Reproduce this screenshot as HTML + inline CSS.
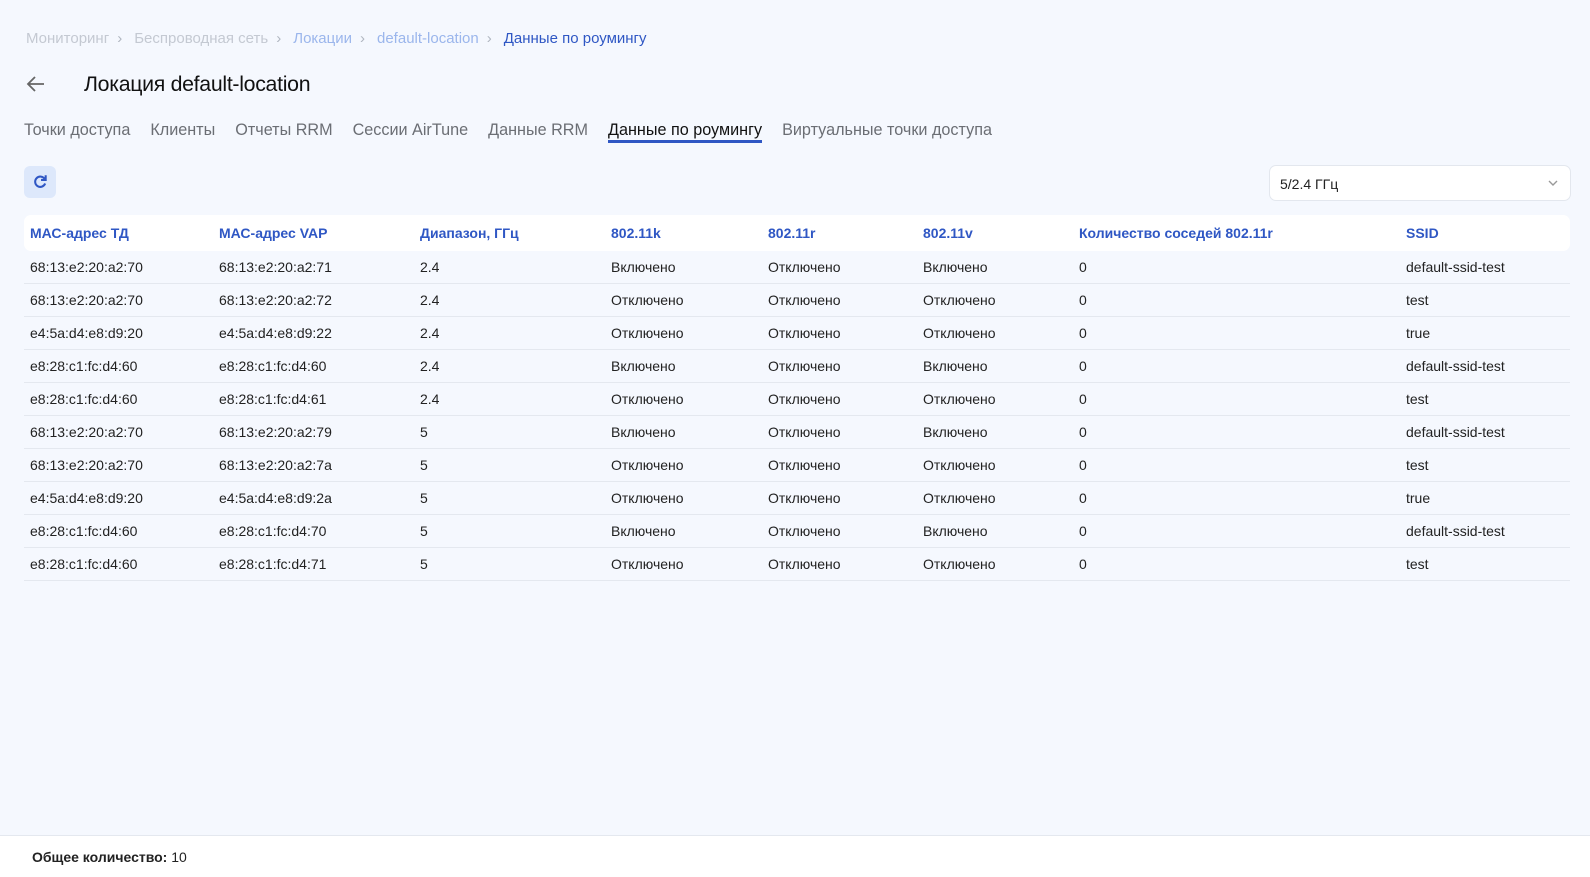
<!DOCTYPE html>
<html><head><meta charset="utf-8"><style>
*{box-sizing:border-box;margin:0;padding:0}
body{width:1590px;height:877px;background:#f5f8fe;font-family:"Liberation Sans","DejaVu Sans",sans-serif;color:#222;position:relative;overflow:hidden}
.bc{position:absolute;top:30px;left:26px;font-size:15px;color:#c4c9d2;white-space:nowrap}
.bc span{margin-right:8px}
.bc .sep{margin:0 12px 0 0;color:#b0b6c0}
.bc .l{color:#9bb6ec}.bc .c{color:#2f57c4}
.title{position:absolute;top:72px;left:84px;font-size:21.3px;color:#111;letter-spacing:-0.3px}
.back{position:absolute;top:75px;left:26px}
.tabs{position:absolute;top:121px;left:24px;font-size:16.2px;color:#6b6e74;white-space:nowrap}
.tabs span{margin-right:20px;display:inline-block}
.tabs .a{color:#111;border-bottom:3px solid #2f57c4;line-height:19px}
.ref{position:absolute;top:166px;left:24px;width:32px;height:32px;background:#dde8fb;border-radius:6px}
.sel{position:absolute;top:165px;left:1269px;width:302px;height:36px;background:#fff;border:1px solid #e3e7ee;border-radius:7px;font-size:14px;padding:10px 10px}
.tbl{position:absolute;top:215px;left:24px;width:1546px}
.row{height:33px;border-bottom:1px solid #e4e8ef;position:relative;font-size:14px}
.hd{background:#fff;border-radius:7px;height:36px;border-bottom:none;color:#2f57c4;font-weight:bold;font-size:14px}
.row div{position:absolute;top:8px;white-space:nowrap}
.hd div{top:10px}
.foot{position:absolute;top:835px;left:0;width:1590px;height:42px;background:#fff;border-top:1px solid #e4e8ef;font-size:14px;padding:13px 32px}
</style></head><body>
<div class="bc"><span>Мониторинг</span><span class="sep">›</span><span>Беспроводная сеть</span><span class="sep">›</span><span class="l">Локации</span><span class="sep">›</span><span class="l">default-location</span><span class="sep">›</span><span class="c">Данные по роумингу</span></div>
<svg class="back" width="20" height="18" viewBox="0 0 20 18"><path d="M18 9H3M9 2L2 9l7 7" stroke="#666" stroke-width="1.8" fill="none"/></svg>
<div class="title">Локация default-location</div>
<div class="tabs"><span>Точки доступа</span><span>Клиенты</span><span>Отчеты RRM</span><span>Сессии AirTune</span><span>Данные RRM</span><span class="a">Данные по роумингу</span><span>Виртуальные точки доступа</span></div>
<div class="ref"><svg width="32" height="32" viewBox="0 0 31 31"><path d="M20 12.5A5 5 0 1 0 20.5 17" stroke="#2f57c4" stroke-width="2" fill="none"/><path d="M21 9v4.5h-4.5" stroke="#2f57c4" stroke-width="2" fill="none"/></svg></div>
<div class="sel">5/2.4 ГГц<svg style="position:absolute;right:12px;top:14px" width="10" height="7" viewBox="0 0 10 7"><path d="M1 1l4 4 4-4" stroke="#999" stroke-width="1.4" fill="none"/></svg></div>
<div class="tbl">
<div class="row hd"><div style="left:6px">МАС-адрес ТД</div><div style="left:195px">МАС-адрес VAP</div><div style="left:396px">Диапазон, ГГц</div><div style="left:587px">802.11k</div><div style="left:744px">802.11r</div><div style="left:899px">802.11v</div><div style="left:1055px">Количество соседей 802.11r</div><div style="left:1382px">SSID</div></div>
<div class="row"><div style="left:6px">68:13:e2:20:a2:70</div><div style="left:195px">68:13:e2:20:a2:71</div><div style="left:396px">2.4</div><div style="left:587px">Включено</div><div style="left:744px">Отключено</div><div style="left:899px">Включено</div><div style="left:1055px">0</div><div style="left:1382px">default-ssid-test</div></div>
<div class="row"><div style="left:6px">68:13:e2:20:a2:70</div><div style="left:195px">68:13:e2:20:a2:72</div><div style="left:396px">2.4</div><div style="left:587px">Отключено</div><div style="left:744px">Отключено</div><div style="left:899px">Отключено</div><div style="left:1055px">0</div><div style="left:1382px">test</div></div>
<div class="row"><div style="left:6px">e4:5a:d4:e8:d9:20</div><div style="left:195px">e4:5a:d4:e8:d9:22</div><div style="left:396px">2.4</div><div style="left:587px">Отключено</div><div style="left:744px">Отключено</div><div style="left:899px">Отключено</div><div style="left:1055px">0</div><div style="left:1382px">true</div></div>
<div class="row"><div style="left:6px">e8:28:c1:fc:d4:60</div><div style="left:195px">e8:28:c1:fc:d4:60</div><div style="left:396px">2.4</div><div style="left:587px">Включено</div><div style="left:744px">Отключено</div><div style="left:899px">Включено</div><div style="left:1055px">0</div><div style="left:1382px">default-ssid-test</div></div>
<div class="row"><div style="left:6px">e8:28:c1:fc:d4:60</div><div style="left:195px">e8:28:c1:fc:d4:61</div><div style="left:396px">2.4</div><div style="left:587px">Отключено</div><div style="left:744px">Отключено</div><div style="left:899px">Отключено</div><div style="left:1055px">0</div><div style="left:1382px">test</div></div>
<div class="row"><div style="left:6px">68:13:e2:20:a2:70</div><div style="left:195px">68:13:e2:20:a2:79</div><div style="left:396px">5</div><div style="left:587px">Включено</div><div style="left:744px">Отключено</div><div style="left:899px">Включено</div><div style="left:1055px">0</div><div style="left:1382px">default-ssid-test</div></div>
<div class="row"><div style="left:6px">68:13:e2:20:a2:70</div><div style="left:195px">68:13:e2:20:a2:7a</div><div style="left:396px">5</div><div style="left:587px">Отключено</div><div style="left:744px">Отключено</div><div style="left:899px">Отключено</div><div style="left:1055px">0</div><div style="left:1382px">test</div></div>
<div class="row"><div style="left:6px">e4:5a:d4:e8:d9:20</div><div style="left:195px">e4:5a:d4:e8:d9:2a</div><div style="left:396px">5</div><div style="left:587px">Отключено</div><div style="left:744px">Отключено</div><div style="left:899px">Отключено</div><div style="left:1055px">0</div><div style="left:1382px">true</div></div>
<div class="row"><div style="left:6px">e8:28:c1:fc:d4:60</div><div style="left:195px">e8:28:c1:fc:d4:70</div><div style="left:396px">5</div><div style="left:587px">Включено</div><div style="left:744px">Отключено</div><div style="left:899px">Включено</div><div style="left:1055px">0</div><div style="left:1382px">default-ssid-test</div></div>
<div class="row"><div style="left:6px">e8:28:c1:fc:d4:60</div><div style="left:195px">e8:28:c1:fc:d4:71</div><div style="left:396px">5</div><div style="left:587px">Отключено</div><div style="left:744px">Отключено</div><div style="left:899px">Отключено</div><div style="left:1055px">0</div><div style="left:1382px">test</div></div>
</div>
<div class="foot"><b>Общее количество:</b> 10</div>
</body></html>
